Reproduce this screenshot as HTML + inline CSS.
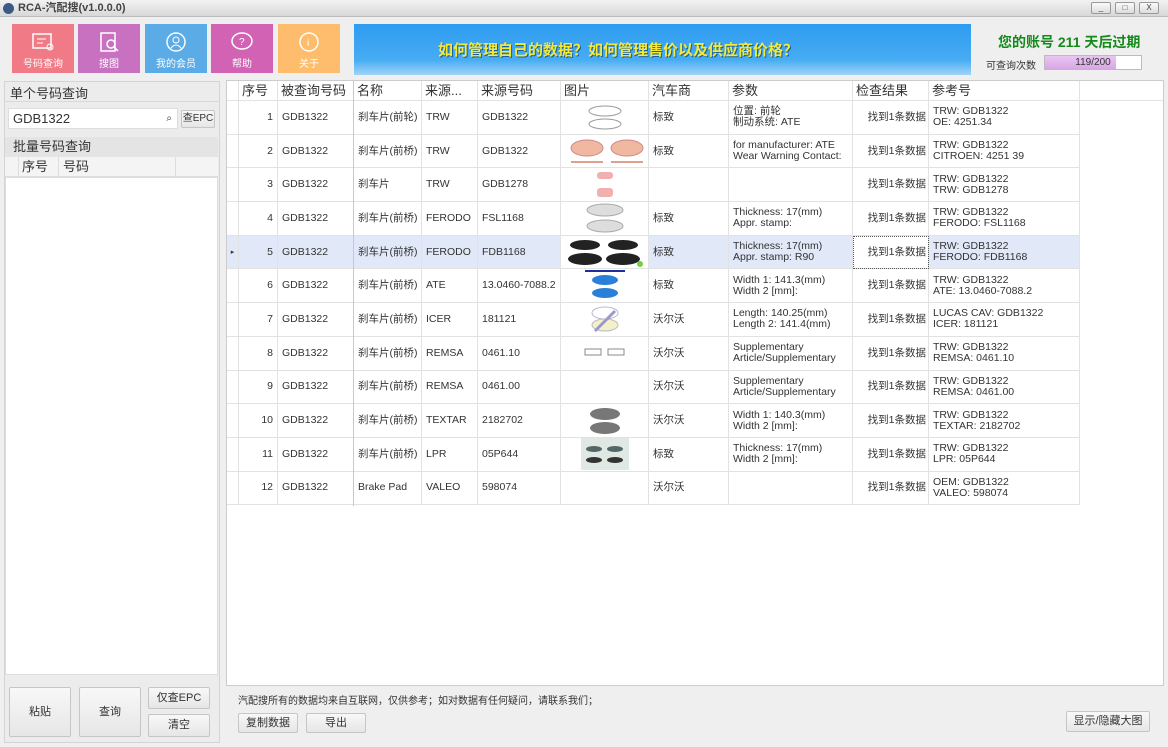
<!DOCTYPE html>
<html><head><meta charset="utf-8"><style>
*{box-sizing:border-box;margin:0;padding:0}
body{width:1168px;height:747px;overflow:hidden;background:#efefef;font-family:"Liberation Sans","Noto Sans CJK SC",sans-serif;position:relative;color:#333}
.a{position:absolute}
.title{left:0;top:0;width:1168px;height:17px;background:linear-gradient(#f2f2f2,#d8d8d8);border-bottom:1px solid #bbb;font-size:11px;font-weight:bold;color:#444;line-height:16px;padding-left:18px}
.wb{top:2px;width:20px;height:12px;border:1px solid #999;background:linear-gradient(#fafafa,#ddd);font-size:8px;text-align:center;line-height:10px;color:#444;border-radius:2px}
.tb{top:24px;width:62px;height:49px;color:#fff;font-size:10px;text-align:center}
.tb svg{display:block;margin:7px auto 2px}
.grid{display:grid;grid-template-columns:12px 39px 76px 68px 56px 83px 88px 80px 124px 76px 151px 83px}
.grid>div{border-right:1px solid #e2e2e2;border-bottom:1px solid #e2e2e2;font-size:10.5px;padding:0 4px;display:flex;align-items:center;white-space:nowrap;overflow:hidden;line-height:11px}
.hd>div{font-size:13px;color:#333;height:20px;padding:0 3px}
.r{height:33.7px}
.r>div.n{justify-content:flex-end}
.r>div.c{justify-content:flex-end;padding-right:2px}
.sel>div{background:#e1e8f7}
.btn{border:1px solid #c6c6c6;background:linear-gradient(#f8f8f8,#e6e6e6);border-radius:2px;font-size:11px;text-align:center;color:#333}
</style></head><body>
<div class="a title">RCA-汽配搜(v1.0.0.0)</div>
<div class="a" style="left:3px;top:3px;width:11px;height:11px;border-radius:50%;background:#3c5a88"></div>
<div class="a wb" style="left:1091px">_</div><div class="a wb" style="left:1115px">□</div><div class="a wb" style="left:1139px">X</div>

<div class="a tb" style="left:12px;background:#f07a85"><svg width="26" height="22"><rect x="3" y="3" width="18" height="14" fill="none" stroke="#fff" stroke-width="1.5"/><line x1="7" y1="8" x2="16" y2="8" stroke="#fff"/><line x1="7" y1="12" x2="13" y2="12" stroke="#fff"/><circle cx="20" cy="16" r="3" fill="none" stroke="#fff"/></svg>号码查询</div>
<div class="a tb" style="left:78px;background:#c771c0"><svg width="26" height="22"><rect x="5" y="2" width="14" height="18" fill="none" stroke="#fff" stroke-width="1.5"/><circle cx="15" cy="13" r="4" fill="none" stroke="#fff" stroke-width="1.5"/><line x1="18" y1="16" x2="22" y2="20" stroke="#fff" stroke-width="1.5"/></svg>搜图</div>
<div class="a tb" style="left:145px;background:#5babe6"><svg width="26" height="22"><circle cx="13" cy="11" r="9" fill="none" stroke="#fff" stroke-width="1.5"/><circle cx="13" cy="9" r="3" fill="none" stroke="#fff"/><path d="M8 17 Q13 11 18 17" fill="none" stroke="#fff"/></svg>我的会员</div>
<div class="a tb" style="left:211px;background:#d263b4"><svg width="26" height="22"><ellipse cx="13" cy="10" rx="10" ry="8" fill="none" stroke="#fff" stroke-width="1.5"/><text x="10" y="14" fill="#fff" font-size="10">?</text></svg>帮助</div>
<div class="a tb" style="left:278px;background:#fdbd6c"><svg width="26" height="22"><circle cx="13" cy="11" r="9" fill="none" stroke="#fff" stroke-width="1.5"/><text x="11" y="15" fill="#fff" font-size="10">i</text></svg>关于</div>

<div class="a" style="left:354px;top:24px;width:617px;height:51px;background:linear-gradient(180deg,#2f9cf0,#46acf3 70%,#9fd4f7);overflow:hidden">
<div class="a" style="left:66px;top:15px;width:396px;text-align:center;font-size:15px;font-weight:bold;color:#f4e93a;white-space:nowrap;text-shadow:1px 1px 0 #1a5e9a">如何管理自己的数据？如何管理售价以及供应商价格？</div></div>

<div class="a" style="left:998px;top:32px;font-size:14px;font-weight:bold;color:#138a1a">您的账号 211 天后过期</div>
<div class="a" style="left:986px;top:57px;font-size:10px;color:#333">可查询次数</div>
<div class="a" style="left:1044px;top:55px;width:98px;height:15px;border:1px solid #bbb;background:#fff"><div style="width:71px;height:13px;background:linear-gradient(#e9c6f2,#d8a6e6)"></div><div class="a" style="left:0;top:0;width:96px;text-align:center;font-size:10px;line-height:13px">119/200</div></div>

<div class="a" style="left:4px;top:81px;width:216px;height:662px;background:#ececec;border:1px solid #d4d4d4"></div>
<div class="a" style="left:10px;top:83px;font-size:13px">单个号码查询</div>
<div class="a" style="left:4px;top:101px;width:216px;height:1px;background:#d8d8d8"></div>
<div class="a" style="left:8px;top:108px;width:170px;height:21px;background:#fff;border:1px solid #ddd;font-size:13px;line-height:19px;padding-left:4px">GDB1322<span style="position:absolute;right:5px;font-size:10px">⌕</span></div>
<div class="a btn" style="left:181px;top:110px;width:34px;height:18px;font-size:10px;line-height:16px">查EPC</div>
<div class="a" style="left:5px;top:137px;width:213px;height:20px;background:#e4e4e4;font-size:13px;padding-left:8px;line-height:19px">批量号码查询</div>
<div class="a" style="left:5px;top:157px;width:213px;height:20px;background:#f4f4f4;border-bottom:1px solid #ddd;font-size:13px;line-height:20px"><span class="a" style="left:17px">序号</span><span class="a" style="left:58px">号码</span><span class="a" style="left:13px;top:0;width:1px;height:20px;background:#ddd"></span><span class="a" style="left:53px;top:0;width:1px;height:20px;background:#ddd"></span><span class="a" style="left:170px;top:0;width:1px;height:20px;background:#ddd"></span></div>
<div class="a" style="left:5px;top:177px;width:213px;height:498px;background:#fff;border:1px solid #ddd"></div>
<div class="a btn" style="left:9px;top:687px;width:62px;height:50px;line-height:48px">粘贴</div>
<div class="a btn" style="left:79px;top:687px;width:62px;height:50px;line-height:48px">查询</div>
<div class="a btn" style="left:148px;top:687px;width:62px;height:22px;line-height:20px">仅查EPC</div>
<div class="a btn" style="left:148px;top:714px;width:62px;height:23px;line-height:21px">清空</div>

<div class="a" style="left:226px;top:80px;width:938px;height:606px;background:#fff;border:1px solid #ccc"></div>
<div class="a" style="left:227px;top:81px;width:936px">
<div class="grid hd"><div></div><div>序号</div><div>被查询号码</div><div>名称</div><div>来源...</div><div>来源号码</div><div>图片</div><div>汽车商</div><div>参数</div><div>检查结果</div><div>参考号</div><div style="border-right:none"></div></div>
<div class="grid r"><div></div><div class="n">1</div><div>GDB1322</div><div>刹车片(前轮)</div><div>TRW</div><div>GDB1322</div><div style="justify-content:center"><svg width="40" height="28"><ellipse cx="20" cy="8" rx="16" ry="5" fill="none" stroke="#999"/><ellipse cx="20" cy="21" rx="16" ry="5" fill="none" stroke="#999"/></svg></div><div>标致</div><div>位置: 前轮<br>制动系统: ATE</div><div class="c">找到1条数据</div><div>TRW: GDB1322<br>OE: 4251.34</div><div></div></div>
<div class="grid r"><div></div><div class="n">2</div><div>GDB1322</div><div>刹车片(前桥)</div><div>TRW</div><div>GDB1322</div><div style="justify-content:center"><svg width="84" height="30"><ellipse cx="22" cy="12" rx="16" ry="8" fill="#f0b8a0" stroke="#c88"/><ellipse cx="62" cy="12" rx="16" ry="8" fill="#f0b8a0" stroke="#c88"/><line x1="6" y1="26" x2="38" y2="26" stroke="#e0a090" stroke-width="2"/><line x1="46" y1="26" x2="78" y2="26" stroke="#e0a090" stroke-width="2"/></svg></div><div>标致</div><div>for manufacturer: ATE<br>Wear Warning Contact:</div><div class="c">找到1条数据</div><div>TRW: GDB1322<br>CITROEN: 4251 39</div><div></div></div>
<div class="grid r"><div></div><div class="n">3</div><div>GDB1322</div><div>刹车片</div><div>TRW</div><div>GDB1278</div><div style="justify-content:center"><svg width="30" height="30"><rect x="7" y="2" width="16" height="7" rx="3" fill="#f0b0b0"/><rect x="7" y="18" width="16" height="9" rx="3" fill="#f0b0b0"/></svg></div><div></div><div></div><div class="c">找到1条数据</div><div>TRW: GDB1322<br>TRW: GDB1278</div><div></div></div>
<div class="grid r"><div></div><div class="n">4</div><div>GDB1322</div><div>刹车片(前桥)</div><div>FERODO</div><div>FSL1168</div><div style="justify-content:center"><svg width="44" height="32"><ellipse cx="22" cy="8" rx="18" ry="6" fill="#ddd" stroke="#aaa"/><ellipse cx="22" cy="24" rx="18" ry="6" fill="#ddd" stroke="#aaa"/></svg></div><div>标致</div><div>Thickness: 17(mm)<br>Appr. stamp:</div><div class="c">找到1条数据</div><div>TRW: GDB1322<br>FERODO: FSL1168</div><div></div></div>
<div class="grid r sel"><div style="justify-content:center;font-size:7px">▸</div><div class="n">5</div><div>GDB1322</div><div>刹车片(前桥)</div><div>FERODO</div><div>FDB1168</div><div style="justify-content:center;background:#fff"><svg width="80" height="32"><ellipse cx="20" cy="9" rx="15" ry="5" fill="#222"/><ellipse cx="58" cy="9" rx="15" ry="5" fill="#222"/><ellipse cx="20" cy="23" rx="17" ry="6" fill="#222"/><ellipse cx="58" cy="23" rx="17" ry="6" fill="#222"/><circle cx="75" cy="28" r="3" fill="#7c4"/></svg></div><div>标致</div><div>Thickness: 17(mm)<br>Appr. stamp: R90</div><div class="c" style="background:#fff;outline:1px dotted #555;outline-offset:-1px">找到1条数据</div><div>TRW: GDB1322<br>FERODO: FDB1168</div><div style="background:#fff"></div></div>
<div class="grid r"><div></div><div class="n">6</div><div>GDB1322</div><div>刹车片(前桥)</div><div>ATE</div><div>13.0460-7088.2</div><div style="justify-content:center"><svg width="50" height="32"><rect x="5" y="0" width="40" height="2" fill="#1a2fa0"/><ellipse cx="25" cy="10" rx="13" ry="5" fill="#2a7fd8"/><ellipse cx="25" cy="23" rx="13" ry="5" fill="#2a7fd8"/></svg></div><div>标致</div><div>Width 1: 141.3(mm)<br>Width 2 [mm]:</div><div class="c">找到1条数据</div><div>TRW: GDB1322<br>ATE: 13.0460-7088.2</div><div></div></div>
<div class="grid r"><div></div><div class="n">7</div><div>GDB1322</div><div>刹车片(前桥)</div><div>ICER</div><div>181121</div><div style="justify-content:center"><svg width="40" height="32"><ellipse cx="20" cy="10" rx="13" ry="6" fill="none" stroke="#bbc"/><ellipse cx="20" cy="22" rx="13" ry="6" fill="#f4f0c8" stroke="#bbc"/><line x1="10" y1="28" x2="30" y2="8" stroke="#99c" stroke-width="3"/></svg></div><div>沃尔沃</div><div>Length: 140.25(mm)<br>Length 2: 141.4(mm)</div><div class="c">找到1条数据</div><div>LUCAS CAV: GDB1322<br>ICER: 181121</div><div></div></div>
<div class="grid r"><div></div><div class="n">8</div><div>GDB1322</div><div>刹车片(前桥)</div><div>REMSA</div><div>0461.10</div><div style="justify-content:center"><svg width="46" height="14"><rect x="3" y="3" width="16" height="6" fill="none" stroke="#888"/><rect x="26" y="3" width="16" height="6" fill="none" stroke="#888"/></svg></div><div>沃尔沃</div><div>Supplementary<br>Article/Supplementary</div><div class="c">找到1条数据</div><div>TRW: GDB1322<br>REMSA: 0461.10</div><div></div></div>
<div class="grid r"><div></div><div class="n">9</div><div>GDB1322</div><div>刹车片(前桥)</div><div>REMSA</div><div>0461.00</div><div></div><div>沃尔沃</div><div>Supplementary<br>Article/Supplementary</div><div class="c">找到1条数据</div><div>TRW: GDB1322<br>REMSA: 0461.00</div><div></div></div>
<div class="grid r"><div></div><div class="n">10</div><div>GDB1322</div><div>刹车片(前桥)</div><div>TEXTAR</div><div>2182702</div><div style="justify-content:center"><svg width="40" height="32"><ellipse cx="20" cy="9" rx="15" ry="6" fill="#777"/><ellipse cx="20" cy="23" rx="15" ry="6" fill="#777"/></svg></div><div>沃尔沃</div><div>Width 1: 140.3(mm)<br>Width 2 [mm]:</div><div class="c">找到1条数据</div><div>TRW: GDB1322<br>TEXTAR: 2182702</div><div></div></div>
<div class="grid r"><div></div><div class="n">11</div><div>GDB1322</div><div>刹车片(前桥)</div><div>LPR</div><div>05P644</div><div style="justify-content:center"><svg width="48" height="32"><rect x="0" y="0" width="48" height="32" fill="#dfe8e2"/><ellipse cx="13" cy="11" rx="8" ry="3" fill="#566"/><ellipse cx="34" cy="11" rx="8" ry="3" fill="#566"/><ellipse cx="13" cy="22" rx="8" ry="3" fill="#333"/><ellipse cx="34" cy="22" rx="8" ry="3" fill="#333"/></svg></div><div>标致</div><div>Thickness: 17(mm)<br>Width 2 [mm]:</div><div class="c">找到1条数据</div><div>TRW: GDB1322<br>LPR: 05P644</div><div></div></div>
<div class="grid r"><div></div><div class="n">12</div><div>GDB1322</div><div>Brake Pad</div><div>VALEO</div><div>598074</div><div></div><div>沃尔沃</div><div></div><div class="c">找到1条数据</div><div>OEM: GDB1322<br>VALEO: 598074</div><div></div></div>
</div>
<div class="a" style="left:1080px;top:101px;width:83px;height:406px;background:#fff"></div>
<div class="a" style="left:353px;top:81px;width:1px;height:425px;background:#c8c8c8"></div>

<div class="a" style="left:238px;top:692px;font-size:10px;color:#333">汽配搜所有的数据均来自互联网，仅供参考；如对数据有任何疑问，请联系我们；</div>
<div class="a btn" style="left:238px;top:713px;width:60px;height:20px;line-height:18px">复制数据</div>
<div class="a btn" style="left:306px;top:713px;width:60px;height:20px;line-height:18px">导出</div>
<div class="a btn" style="left:1066px;top:711px;width:84px;height:21px;line-height:19px">显示/隐藏大图</div>
</body></html>
